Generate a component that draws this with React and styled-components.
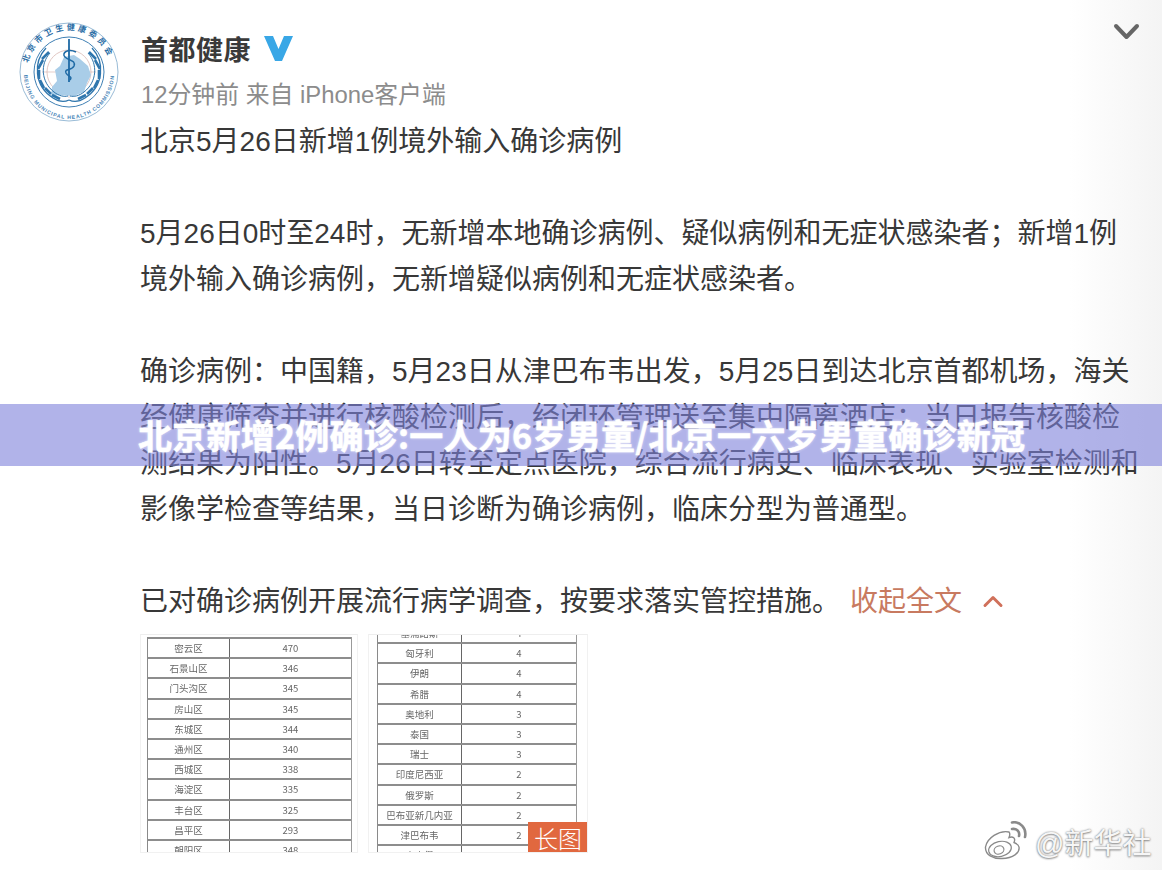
import React from 'react'
import styled, { createGlobalStyle } from 'styled-components'

const Global = createGlobalStyle`
html,body{margin:0;padding:0;background:#fff;}
body{font-family:"Liberation Sans","Noto Sans CJK SC",sans-serif;}
`

const Page = styled.div`
position:relative;
width:1162px;
height:870px;
overflow:hidden;
background:linear-gradient(90deg,#fff 0,#fff 92%,#f4f4f4 100%);
color:#333;
`
const Header = styled.header`
display:flex;
align-items:flex-start;
padding:22px 22px 0 18px;
height:97px;
`
const Avatar = styled.svg`
flex:none;
width:102px;
height:102px;
margin-right:21px;
`
const Who = styled.div`
flex:1;
display:flex;
flex-direction:column;
padding-top:3px;
`
const NameRow = styled.div`
display:flex;
align-items:center;
gap:13px;
height:46px;
margin-bottom:2px;
`
const Name = styled.span`
font-size:27px;
font-weight:700;
color:#3a3a3a;
letter-spacing:.5px;
`
const Meta = styled.div`
font-size:23.85px;
line-height:44px;
color:#8c8c8c;
`
const Collapse = styled.svg`
flex:none;
width:27px;
height:18px;
margin-top:1px;
`
const Body = styled.main`
padding-left:140px;
font-size:28px;
line-height:46px;
color:#383838;
`
const Para = styled.p`
margin:0 0 46px;
white-space:nowrap;
`
const FoldLink = styled.span`
color:#c87a60;
margin-left:10px;
`
const FoldIcon = styled.svg`
width:22px;
height:14px;
margin-left:20px;
vertical-align:3px;
`
const Gallery = styled.div`
display:flex;
gap:10px;
margin-top:-37px;
`
const Sheet = styled.div`
position:relative;
box-sizing:border-box;
width:${p => p.$width}px;
height:219px;
overflow:hidden;
padding:${p => p.$pad};
background:#fff;
border:1px solid #f1f1f1;
border-top-color:#eee;
`
const Table = styled.div`
filter:blur(.6px);
margin-top:${p => p.$top}px;
border-left:1px solid #8a8a8a;
border-right:1px solid #9a9a9a;
`
const Row = styled.div`
display:grid;
grid-template-columns:${p => p.$cols};
height:20.2px;
box-sizing:border-box;
border-top:2px solid #8d8d8d;
`
const Cell = styled.div`
font-family:"Noto Sans CJK SC",sans-serif;
font-size:9.5px;
line-height:18px;
text-align:center;
color:#666;
& + &{border-left:1px solid #666;}
`
const LongTag = styled.span`
position:absolute;
right:-1px;
bottom:-1px;
width:60px;
height:31px;
background:#e1683f;
color:#fff;
font-family:"Noto Sans CJK SC",sans-serif;
font-size:24px;
line-height:31px;
text-align:center;
font-weight:300;
`
const Banner = styled.div`
position:absolute;
left:0;
top:404px;
width:100%;
height:62px;
box-sizing:border-box;
padding-left:138px;
background:rgba(125,128,218,.6);
color:#fff;
font-family:"Noto Sans CJK SC",sans-serif;
font-size:34px;
font-weight:700;
letter-spacing:.25px;
line-height:62px;
white-space:nowrap;
-webkit-text-stroke:.4px #fff;
text-shadow:0 0 3px rgba(255,255,255,.75);
`
const Mark = styled.div`
position:absolute;
left:984px;
top:820px;
display:flex;
align-items:center;
gap:6px;
color:#f6f6f6;
font-size:29px;
white-space:nowrap;
text-shadow:0 0 2px #777,0 1px 2px #999;
`
const MarkIcon = styled.svg`
width:45px;
height:40px;
`

const leftRows = [
  ['密云区', '470'], ['石景山区', '346'], ['门头沟区', '345'], ['房山区', '345'],
  ['东城区', '344'], ['通州区', '340'], ['西城区', '338'], ['海淀区', '335'],
  ['丰台区', '325'], ['昌平区', '293'], ['朝阳区', '348'],
]
const rightRows = [
  ['塞浦路斯', '4'], ['匈牙利', '4'], ['伊朗', '4'], ['希腊', '4'], ['奥地利', '3'],
  ['泰国', '3'], ['瑞士', '3'], ['印度尼西亚', '2'], ['俄罗斯', '2'],
  ['巴布亚新几内亚', '2'], ['津巴布韦', '2'], ['卢森堡', '1'],
]

// one half of the wreath, mirrored for the other side
const Leaves = ({ flip }) => (
  <g transform={flip ? 'translate(102 0) scale(-1 1)' : undefined} fill="none" stroke="#2f76ad">
    <path d="M28 26C15 40 16 64 35 76C41 80 47 80 51 78" strokeWidth="1.3" />
    <path d="M32 31C22 42 23 60 36 70C41 74 46 75 50 74" strokeWidth="1" />
    <path d="M31 30L24 37M25 38L20 47M21 48L21 57M22 58L26 66M27 66L33 72M34 73L42 77" strokeWidth="2.6" />
  </g>
)

const Logo = () => (
  <Avatar viewBox="0 0 102 102">
    <defs>
      <path id="ringTop" d="M10 41A42 42 0 0 1 92 41" />
      <path id="ringBottom" d="M6 52A45 45 0 0 0 96 52" />
    </defs>
    <circle cx="51" cy="50" r="49" fill="#fff" stroke="#7fa9cc" strokeWidth=".8" />
    <circle cx="51" cy="50" r="35" fill="#fff" stroke="#3f80b4" strokeWidth="1" />
    <circle cx="51" cy="50" r="22" fill="none" stroke="#d9b9b4" strokeWidth=".8" />
    <path d="M24 50H78M51 24V76" stroke="#d9b9b4" strokeWidth=".7" />
    <path d="M46 35L56 33L62 37L70 44L73 53L69 61L66 70L56 74L40 73L33 75L34 65L39 59L37 48L42 44Z" fill="#a9cde8" />
    <Leaves />
    <Leaves flip />
    <path d="M51 17V60" stroke="#1f6aa5" strokeWidth="1.8" />
    <path d="M58 30C50 26 43 31 47 35C51 39 58 38 56 44C54 49 46 46 48 51C50 55 55 54 52 58" fill="none" stroke="#1f6aa5" strokeWidth="1.5" />
    <text fontSize="8" fontWeight="700" fill="#2a6da5" fontFamily="Noto Sans CJK SC">
      <textPath href="#ringTop" textLength="106">北京市卫生健康委员会</textPath>
    </text>
    <text fontSize="5.2" fontWeight="700" fill="#4a86b8" fontFamily="Liberation Sans">
      <textPath href="#ringBottom" textLength="138" startOffset="1">BEIJING MUNICIPAL HEALTH COMMISSION</textPath>
    </text>
  </Avatar>
)

const VBadge = () => (
  <svg width="29" height="25" viewBox="0 0 29 25">
    <path d="M0 0H9L14.5 13L20 0H29L18 25H11Z" fill="#39a7e6" />
  </svg>
)

const Weibo = () => (
  <MarkIcon viewBox="0 0 45 40" fill="#fff" stroke="#8a8a8a">
    <path d="M25 11C15 9 3 17 1.5 26C1 34 9 38 18 37.5C29 37 36 32 35 26C34.5 23 31 22 30 21.5C32 17 29 15 25 16.5C26 14 26 12 25 11Z" strokeWidth="1.4" />
    <ellipse cx="16" cy="28" rx="11.5" ry="7.5" transform="rotate(-12 16 28)" strokeWidth="1.2" />
    <ellipse cx="15" cy="29" rx="5" ry="4" transform="rotate(-20 15 29)" strokeWidth="1.2" />
    <path d="M28 1.5C36 0 43 7 41 16M28 8C33 7 36 11 35 15" fill="none" strokeWidth="2.6" strokeLinecap="round" />
  </MarkIcon>
)

const DataTable = ({ rows, cols, top }) => (
  <Table $top={top}>
    {rows.map(([name, value]) => (
      <Row key={name} $cols={cols}>
        <Cell>{name}</Cell>
        <Cell>{value}</Cell>
      </Row>
    ))}
  </Table>
)

const App = () => {
  return (
    <Page>
      <Global />
      <Header>
        <Logo />
        <Who>
          <NameRow>
            <Name>首都健康</Name>
            <VBadge />
          </NameRow>
          <Meta>12分钟前 来自 iPhone客户端</Meta>
        </Who>
        <Collapse viewBox="0 0 27 18">
          <path d="M3 3L13.5 14L24 3" fill="none" stroke="#666" strokeWidth="4" strokeLinecap="round" strokeLinejoin="round" />
        </Collapse>
      </Header>
      <Body>
        <Para>北京5月26日新增1例境外输入确诊病例</Para>
        <Para>
          5月26日0时至24时，无新增本地确诊病例、疑似病例和无症状感染者；新增1例<br />
          境外输入确诊病例，无新增疑似病例和无症状感染者。
        </Para>
        <Para>
          确诊病例：中国籍，5月23日从津巴布韦出发，5月25日到达北京首都机场，海关<br />
          经健康筛查并进行核酸检测后，经闭环管理送至集中隔离酒店；当日报告核酸检<br />
          测结果为阳性。5月26日转至定点医院，综合流行病史、临床表现、实验室检测和<br />
          影像学检查等结果，当日诊断为确诊病例，临床分型为普通型。
        </Para>
        <Para>
          已对确诊病例开展流行病学调查，按要求落实管控措施。
          <FoldLink>收起全文</FoldLink>
          <FoldIcon viewBox="0 0 22 14">
            <path d="M3 11.5L11 3.5L19 11.5" fill="none" stroke="#d0705a" strokeWidth="3" strokeLinecap="round" strokeLinejoin="round" />
          </FoldIcon>
        </Para>
        <Gallery>
          <Sheet $width={218} $pad="0 5px 0 6px">
            <DataTable rows={leftRows} cols="81px 1fr" top={2} />
          </Sheet>
          <Sheet $width={220} $pad="0 10px 0 8px">
            <DataTable rows={rightRows} cols="83px 1fr" top={-13} />
            <LongTag>长图</LongTag>
          </Sheet>
        </Gallery>
      </Body>
      <Banner>北京新增2例确诊:一人为6岁男童/北京一六岁男童确诊新冠</Banner>
      <Mark>
        <Weibo />
        <span>@新华社</span>
      </Mark>
    </Page>
  )
}

export default App
